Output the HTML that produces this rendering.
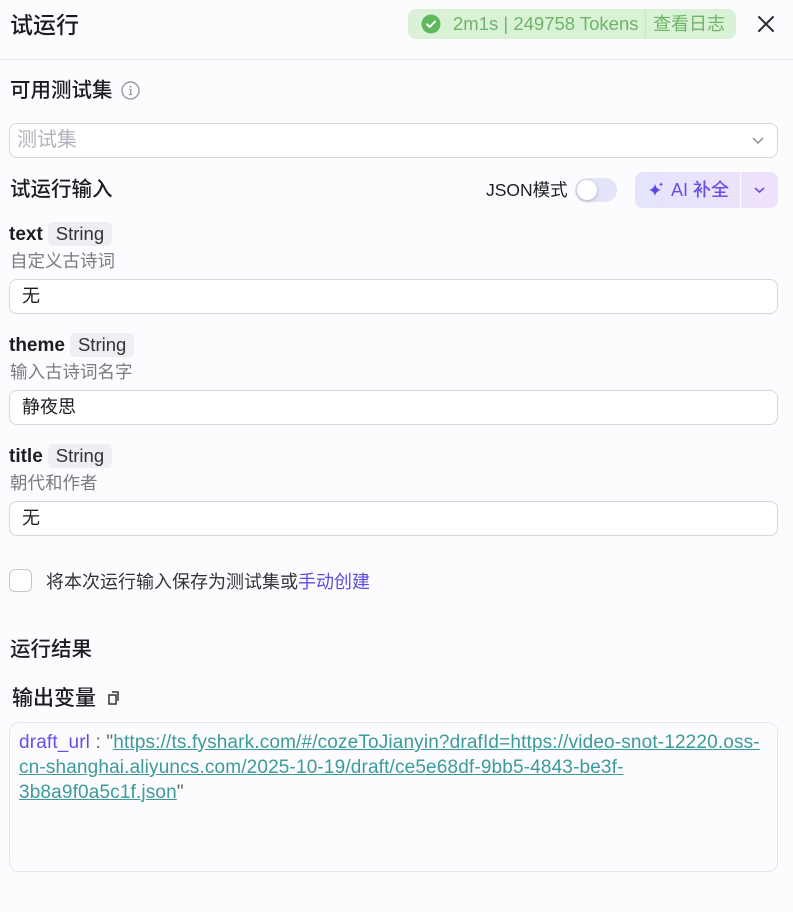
<!DOCTYPE html>
<html><head><meta charset="utf-8"><style>
*{margin:0;padding:0;box-sizing:border-box}
body{width:793px;height:912px;background:#fcfcff;font-family:"Liberation Sans","Noto Sans CJK SC",sans-serif;color:#1d1c24;position:relative;overflow:hidden}
.a{position:absolute;white-space:nowrap}
.inp{position:absolute;left:9px;width:769px;height:35px;border:1px solid #d6d5de;border-radius:8px;background:#fff;font-size:18px;padding-left:12px;line-height:33px}
.tag{display:inline-block;background:#eeeef5;border-radius:5px;padding:0 8px;font-weight:normal;color:#33323a;font-size:18.5px;line-height:24px;margin-left:5px}
.lbl{font-size:19px;font-weight:bold;line-height:24px}
.desc{font-size:17.5px;color:#7b7a85;line-height:24px}
.h{font-size:20.5px;font-weight:500;line-height:28px}
</style></head><body>
<div class="a" style="left:10px;top:9px;font-size:23px;font-weight:500;line-height:32px">试运行</div>
<div class="a" style="left:408px;top:9px;width:328px;height:30px;background:#d9f2d6;border-radius:8px"></div>
<svg class="a" style="left:421px;top:14px" width="20" height="20" viewBox="0 0 20 20"><circle cx="10" cy="10" r="9.5" fill="#5fb95c"/><path d="M6 10.3l2.7 2.6L14 7.6" stroke="#fff" stroke-width="2" fill="none" stroke-linecap="round" stroke-linejoin="round"/></svg>
<div class="a" style="left:453px;top:11px;font-size:18.5px;color:#6fb469;line-height:26px">2m1s | 249758 Tokens</div>
<div class="a" style="left:645px;top:10px;width:1px;height:28px;background:#c3e5bf"></div>
<div class="a" style="left:653px;top:11px;font-size:18px;color:#6fb469;line-height:26px">查看日志</div>
<svg class="a" style="left:757px;top:15px" width="18" height="18" viewBox="0 0 18 18"><path d="M2 2L16 16M16 2L2 16" stroke="#2c2b33" stroke-width="2" stroke-linecap="round"/></svg>
<div class="a" style="left:0;top:59px;width:793px;height:1px;background:#e7e6ee"></div>

<div class="a h" style="left:10px;top:77px">可用测试集</div>
<svg class="a" style="left:121px;top:81px" width="19" height="19" viewBox="0 0 19 19"><circle cx="9.5" cy="9.5" r="8.5" stroke="#9a99a6" stroke-width="1.4" fill="none"/><circle cx="9.5" cy="5.8" r="1" fill="#9a99a6"/><path d="M8.3 8.5h1.4v5M8 13.5h3" stroke="#9a99a6" stroke-width="1.3" fill="none"/></svg>
<div class="inp" style="top:123px;color:#b3b2bd;font-size:20px;padding-left:7px">测试集</div>
<svg class="a" style="left:751px;top:136px" width="14" height="9" viewBox="0 0 14 9"><path d="M2 2l5 5 5-5" stroke="#888" stroke-width="1.4" fill="none"/></svg>

<div class="a h" style="left:10px;top:176px">试运行输入</div>
<div class="a" style="left:486px;top:177px;font-size:17.5px;line-height:26px">JSON模式</div>
<div class="a" style="left:575px;top:178px;width:42px;height:24px;border-radius:12px;background:#e3e4f8"></div>
<div class="a" style="left:577px;top:180px;width:20px;height:20px;border-radius:10px;background:#fff;box-shadow:0 1px 3px rgba(0,0,0,.25)"></div>
<div class="a" style="left:635px;top:172px;width:143px;height:36px;border-radius:8px;background:linear-gradient(90deg,#e4e5fd,#efe1fb)"></div>
<div class="a" style="left:740px;top:172px;width:1px;height:36px;background:#fff"></div>
<svg class="a" style="left:647px;top:181px" width="18" height="18" viewBox="0 0 18 18"><path d="M8 3q1 5 6 6q-5 1-6 6q-1-5-6-6q5-1 6-6z" fill="#5a45e6"/><path d="M14 1q.4 2 2 2.4q-1.6.4-2 2.4q-.4-2-2-2.4q1.6-.4 2-2.4z" fill="#5a45e6"/></svg>
<div class="a" style="left:671px;top:178px;font-size:18px;color:#6a4ce8;line-height:24px;font-weight:500">AI 补全</div>
<svg class="a" style="left:753px;top:186px" width="13" height="8" viewBox="0 0 13 8"><path d="M2 2l4.5 4 4.5-4" stroke="#6a4ce8" stroke-width="1.6" fill="none"/></svg>

<div class="a lbl" style="left:9px;top:222px">text<span class="tag">String</span></div>
<div class="a desc" style="left:10px;top:249px">自定义古诗词</div>
<div class="inp" style="top:279px">无</div>

<div class="a lbl" style="left:9px;top:333px">theme<span class="tag">String</span></div>
<div class="a desc" style="left:10px;top:360px">输入古诗词名字</div>
<div class="inp" style="top:390px">静夜思</div>

<div class="a lbl" style="left:9px;top:444px">title<span class="tag">String</span></div>
<div class="a desc" style="left:10px;top:471px">朝代和作者</div>
<div class="inp" style="top:501px">无</div>

<div class="a" style="left:9px;top:569px;width:23px;height:23px;border:1.5px solid #c5c4d0;border-radius:6px;background:#fff"></div>
<div class="a" style="left:46px;top:569px;font-size:18px;color:#33323a;line-height:26px">将本次运行输入保存为测试集或<span style="color:#5b4be6">手动创建</span></div>

<div class="a h" style="left:10px;top:636px">运行结果</div>
<div class="a" style="left:12px;top:685px;font-size:21px;font-weight:500;line-height:28px">输出变量</div>
<svg class="a" style="left:107px;top:690px" width="14" height="16" viewBox="0 0 14 16"><rect x="2" y="5" width="7" height="9" stroke="#333" stroke-width="1.5" fill="none"/><path d="M5 2h6v9" stroke="#333" stroke-width="1.5" fill="none"/></svg>
<div class="a" style="left:9px;top:722px;width:769px;height:150px;border:1px solid #e6e5ee;border-radius:10px;background:#fcfcff"></div>
<div class="a" style="left:19px;top:730px;font-size:19px;line-height:25px;color:#666;letter-spacing:0.15px"><span style="color:#6b4ce8">draft_url</span> : "<span style="color:#3d9a9a;text-decoration:underline">https://ts.fyshark.com/#/cozeToJianyin?drafId=https://video-snot-12220.oss-</span><br><span style="color:#3d9a9a;text-decoration:underline">cn-shanghai.aliyuncs.com/2025-10-19/draft/ce5e68df-9bb5-4843-be3f-</span><br><span style="color:#3d9a9a;text-decoration:underline">3b8a9f0a5c1f.json</span>"</div>
</body></html>
